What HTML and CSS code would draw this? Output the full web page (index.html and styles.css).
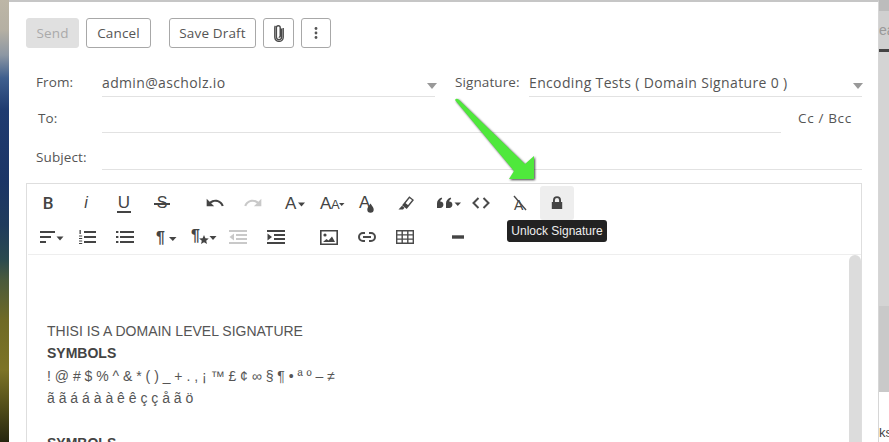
FILE: index.html
```html
<!DOCTYPE html>
<html lang="en">
<head>
<meta charset="utf-8">
<title>Compose</title>
<link rel="stylesheet" href="styles.css">
</head>
<body>
<div class="desktop">
  <div class="wallpaper"></div>
  <main class="dialog">
    <div class="actions">
      <button class="btn btn-send">Send</button>
      <button class="btn btn-cancel">Cancel</button>
      <button class="btn btn-draft">Save Draft</button>
      <button class="btn btn-icon btn-attach" aria-label="Attach">
        <svg width="12" height="18" viewBox="0 0 12 18"><path d="M8.6 4.5v8.6a2.6 2.6 0 0 1-5.2 0V3.6a1.9 1.900 0 0 1 3.800 0v8.600a.9.9 0 0 1-1.400.7" class="ln"/><path d="M10.200 4v9.200a4.200 4.200 0 0 1-8.400 0V3.800a3.200 3.200 0 0 1 .6-2" class="ln"/></svg>
      </button>
      <button class="btn btn-icon btn-more" aria-label="More">
        <svg width="4" height="14" viewBox="0 0 4 14"><circle cx="2" cy="2.500" r="1.400"/><circle cx="2" cy="7" r="1.400"/><circle cx="2" cy="11.500" r="1.400"/></svg>
      </button>
    </div>

    <div class="row row-from">
      <span class="label label-main">From:</span>
      <div class="field field-from"><span>admin@ascholz.io</span><i class="select-caret"></i></div>
      <span class="label label-sig">Signature:</span>
      <div class="field field-sig"><span>Encoding Tests ( Domain Signature 0 )</span><i class="select-caret"></i></div>
    </div>
    <div class="row row-to">
      <span class="label label-main label-to">To:</span>
      <div class="field field-to"></div>
      <span class="cc">Cc / Bcc</span>
    </div>
    <div class="row row-subject">
      <span class="label label-main">Subject:</span>
      <div class="field field-subject"></div>
    </div>

    <section class="editor">
      <div class="toolbar">
        <div class="tb-row">
          <button class="tb w38"><span class="t-b">B</span></button>
          <button class="tb w38"><span class="t-i">i</span></button>
          <button class="tb w38"><span class="t-u">U</span></button>
          <button class="tb w38"><span class="t-s">S</span></button>
          <button class="tb w38 g15"><svg width="20" height="20" viewBox="0 0 24 24"><path d="M12.500 8c-2.650 0-5.050.99-6.900 2.600L2 7v9h9l-3.620-3.620c1.390-1.160 3.160-1.880 5.120-1.880 3.540 0 6.550 2.310 7.600 5.500l2.370-.78C21.080 11.030 17.150 8 12.500 8z"/></svg></button>
          <button class="tb w38 muted"><svg width="20" height="20" viewBox="0 0 24 24"><path d="M11.500 8c2.650 0 5.050.99 6.900 2.600L22 7v9h-9l3.620-3.620C15.230 11.220 13.460 10.500 11.500 10.500c-3.540 0-6.550 2.310-7.600 5.500l-2.370-.78C2.920 11.030 6.850 8 11.500 8z"/></svg></button>
          <button class="tb w38 g4"><svg width="24" height="20" viewBox="0 0 24 20"><text x="2" y="16" class="svgt s17">A</text><path d="M15 9.500h7l-3.500 4z"/></svg></button>
          <button class="tb w36"><svg width="26" height="20" viewBox="0 0 26 20"><text x="1" y="16" class="svgt s17">A</text><text x="12" y="16" class="svgt s13">A</text><path d="M20 10h5.500L22.700 13z"/></svg></button>
          <button class="tb w34"><svg width="16" height="20" viewBox="0 0 16 20"><text x="0" y="15" class="svgt s17">A</text><path d="M10.500 9.500c1.600 2.600 3.200 4 3.200 6a3.200 3.200 0 0 1-6.400 0c0-2 1.600-3.400 3.200-6z" transform="translate(1 1)"/></svg></button>
          <button class="tb w38 g3"><svg width="18" height="18" viewBox="0 0 18 18"><path d="M6 11.200 12.400 3.200l3.600 2.800-6.400 8z" class="ln"/><path d="M8 8.800l3.600 2.800L9.600 14 6 11.200z"/><path d="M1.500 15.500 5 11.800l2.500 2L6 15.500z"/></svg></button>
          <button class="tb w34 g7"><svg width="26" height="20" viewBox="0 0 26 20"><path d="M1 15V10.500C1 7.800 2.600 5.600 5.600 4.500l.6 1.400C4.900 6.600 4.200 7.600 4.200 8.600c2 0 3.200 1.200 3.200 3.200S6 15 4.200 15zM10 15V10.500c0-2.700 1.600-4.900 4.600-6l.6 1.400c-1.300.7-2 1.700-2 2.700 2 0 3.200 1.200 3.200 3.200S15 15 13.200 15z"/><path d="M18.500 9.500h6.500l-3.200 3.600z"/></svg></button>
          <button class="tb w30"><svg width="18" height="14" viewBox="0 0 18 14"><path d="M6.500 2 1.500 7l5 5M11.500 2l5 5-5 5" class="ln2"/></svg></button>
          <button class="tb w38 g5"><svg width="16" height="18" viewBox="0 0 16 18"><text x="2" y="15.500" class="svgt s14">A</text><path d="M2 2 14 16" class="ln"/></svg></button>
          <div class="tb-lock">
            <button class="tb w34 active"><svg width="12" height="14" viewBox="0 0 12 14"><path d="M2 6V4.200a4 4 0 0 1 8 0V6h1.200v7H.8V6zm1.900 0h4.200V4.200a2.100 2.100 0 0 0-4.200 0z"/></svg></button>
            <div class="tooltip">Unlock Signature</div>
          </div>
        </div>
        <div class="tb-row">
          <button class="tb w38 g4"><svg width="24" height="14" viewBox="0 0 24 14"><rect x="0" y="1" width="15" height="2"/><rect x="0" y="6" width="11" height="2"/><rect x="0" y="11" width="6" height="2"/><path d="M16.500 6.500h7L20 10.500z"/></svg></button>
          <button class="tb w32"><svg width="18" height="16" viewBox="0 0 18 16"><rect x="6" y="2" width="12" height="2"/><rect x="6" y="7" width="12" height="2"/><rect x="6" y="12" width="12" height="2"/><rect x="1.500" y="1" width="1.300" height="4"/><rect x="1" y="6.500" width="3.200" height="1"/><rect x="1" y="9" width="3.200" height="1"/><rect x="1" y="11.500" width="3.200" height="1"/><rect x="1" y="14" width="3.200" height="1"/></svg></button>
          <button class="tb w38 g3"><svg width="18" height="14" viewBox="0 0 18 14"><rect x="4" y="1" width="14" height="2"/><rect x="4" y="6" width="14" height="2"/><rect x="4" y="11" width="14" height="2"/><rect x="0" y="1" width="2.400" height="2"/><rect x="0" y="6" width="2.400" height="2"/><rect x="0" y="11" width="2.400" height="2"/></svg></button>
          <button class="tb w38 g4"><svg width="22" height="20" viewBox="0 0 22 20"><text x="0" y="16" class="svgt s16 bold">¶</text><path d="M13 10h7.500l-3.700 4z"/></svg></button>
          <button class="tb w35"><svg width="26" height="22" viewBox="0 0 26 22"><text x="0" y="15" class="svgt s16 bold">¶</text><path d="M13 9l1.400 3.200 3.400.3-2.600 2.200.8 3.300-3-1.800-3 1.800.8-3.300-2.600-2.200 3.400-.3z"/><path d="M18.500 10h7l-3.500 4z"/></svg></button>
          <button class="tb w34 muted"><svg width="18" height="14" viewBox="0 0 18 14"><rect x="0" y="0" width="18" height="2"/><rect x="7" y="4" width="11" height="2"/><rect x="7" y="8" width="11" height="2"/><rect x="0" y="12" width="18" height="2"/><path d="M5 3.500v7L0.500 7z"/></svg></button>
          <button class="tb w38 g2"><svg width="18" height="14" viewBox="0 0 18 14"><rect x="0" y="0" width="18" height="2"/><rect x="7" y="4" width="11" height="2"/><rect x="7" y="8" width="11" height="2"/><rect x="0" y="12" width="18" height="2"/><path d="M0.500 3.500v7L5 7z"/></svg></button>
          <button class="tb w38 g15"><svg width="18" height="15" viewBox="0 0 18 15"><path fill-rule="evenodd" d="M0 0h18v15H0zM1.600 1.600v11.800h14.800V1.600z"/><circle cx="5" cy="5" r="1.600"/><path d="M3 12l3.500-3 2 1.600L12 6.500l3 5.500z"/></svg></button>
          <button class="tb w38"><svg width="18" height="12" viewBox="0 0 18 12"><path d="M7 2H5a4 4 0 0 0 0 8h2M11 2h2a4 4 0 0 1 0 8h-2" class="ln2"/><path d="M5 6h8" class="ln2"/></svg></button>
          <button class="tb w38"><svg width="18" height="14" viewBox="0 0 18 14"><path d="M.7.7h16.600v12.600H.7zM.7 4.900h16.600M.7 9.100h16.600M6.200.7v12.600M11.800.7v12.600" class="ln"/></svg></button>
          <button class="tb w38 g15"><svg width="12" height="4" viewBox="0 0 12 4"><rect width="12" height="3.400" y=".3"/></svg></button>
        </div>
      </div>
      <div class="editor-body">
        <div class="content">
          <p>THISI IS A DOMAIN LEVEL SIGNATURE</p>
          <p><strong>SYMBOLS</strong></p>
          <p>! @ # $ % ^ &amp; * ( ) _ + . , ¡ ™ £ ¢ ∞ § ¶ • ª º – ≠</p>
          <p>ã ã á á à à ê ê ç ç å ã ö</p>
          <p>&nbsp;</p>
          <p><strong>SYMBOLS</strong></p>
        </div>
        <div class="scrollbar"></div>
      </div>
    </section>

    <svg class="arrow" width="90" height="90" viewBox="0 0 90 90"><path d="M1 2Q2 0 4 1L71 66 80 58 80 81 55 81 60 73Z"/></svg>
  </main>
  <aside class="behind">
    <div class="behind-top"></div>
    <div class="behind-search">ea</div>
    <div class="behind-rule"></div>
    <div class="behind-light"></div>
    <div class="behind-dark"></div>
    <div class="behind-foot">ks</div>
  </aside>
</div>
</body>
</html>
```

FILE: styles.css
```css
* { box-sizing: border-box; }
html, body { margin: 0; padding: 0; background: #fff; }
.desktop {
  position: relative;
  display: flex;
  width: 889px;
  height: 442px;
  overflow: hidden;
  font-family: "Open Sans", sans-serif;
  color: #555;
}
.wallpaper {
  flex: 0 0 9px;
  background: linear-gradient(180deg, #bdb6a6 0, #b5b0a3 30px, #8d97a3 55px, #3f5f8e 78px, #1f3b70 110px, #1b3566 180px, #1f3b5c 225px, #2b4a4e 260px, #4a5a3c 280px, #6f6a25 320px, #7d7426 370px, #4e4a18 410px, #26260f 442px);
}
.dialog {
  position: relative;
  flex: 0 0 870px;
  height: 442px;
  padding: 16px 16px 0 17px;
  background: #fff;
  border-top: 2px solid #c6c6c6;
  border-right: 1px solid #d6d6d6;
}

.actions { display: flex; height: 30px; }
.btn {
  height: 30px;
  padding: 0;
  margin: 0;
  border: 1px solid #a8a8a8;
  border-radius: 3px;
  background: #fff;
  color: #555;
  font: 13.5px/28px "Open Sans", sans-serif;
  letter-spacing: .15px;
  display: flex;
  align-items: center;
  justify-content: center;
}
.btn-send { width: 53px; background: #e0e0e0; border-color: #e0e0e0; color: #aaa; }
.btn-cancel { width: 65px; margin-left: 7px; }
.btn-draft { width: 87px; margin-left: 18px; }
.btn-attach { width: 31px; margin-left: 7px; }
.btn-more { width: 30px; margin-left: 7px; }
.btn svg { fill: #555; }
.ln { fill: none; stroke: #4a4a4a; stroke-width: 1.4; }
.ln2 { fill: none; stroke: #4a4a4a; stroke-width: 2; }

.row { display: flex; align-items: flex-end; font-size: 14px; letter-spacing: .35px; }
.row-from { height: 36px; margin-top: 13px; }
.row-to { height: 36px; }
.row-subject { height: 37px; }
.label { color: #555; font-size: 13.5px; letter-spacing: .1px; line-height: 20px; }
.label-main { flex: 0 0 76px; padding-left: 10px; }
.row-from .label-main, .row-to .label-main { padding-bottom: 5px; }
.row-subject .label-main { padding-bottom: 3px; }
.label-to { padding-left: 12px; }
.label-sig { flex: 0 0 74px; padding-bottom: 5px; margin-left: 20px; }
.field {
  position: relative;
  height: 24px;
  border-bottom: 1px solid #e2e2e2;
  line-height: 20px;
  color: #555;
}
.field-from { flex: 0 0 333px; }
.field-sig { flex: 0 0 333px; }
.field-to { flex: 0 0 679px; }
.field-subject { flex: 0 0 760px; }
.select-caret {
  position: absolute;
  right: -2px;
  top: 10px;
  width: 0;
  height: 0;
  border-left: 5.5px solid transparent;
  border-right: 5.5px solid transparent;
  border-top: 6px solid #999;
}
.field-sig .select-caret { right: -1px; }
.cc { margin-left: 17px; padding-bottom: 5px; line-height: 20px; font-size: 13.5px; letter-spacing: .65px; }

.editor {
  margin-top: 13px;
  height: 300px;
  border: 1px solid #dedede;
  background: #fff;
}
.toolbar { height: 71px; padding: 2px 0 0 1px; border-bottom: 1px solid #eee; margin-left: 1px; }
.tb-row { display: flex; height: 34px; }
.tb {
  height: 34px;
  padding: 0;
  border: 0;
  border-radius: 3px;
  background: transparent;
  display: flex;
  align-items: center;
  justify-content: center;
  flex: none;
  color: #444;
}
.tb svg { fill: #444; overflow: visible; }
.tb.muted svg { fill: #c9c9c9; }
.w30 { width: 30px; }
.w32 { width: 32px; }
.w34 { width: 34px; }
.w35 { width: 35px; }
.w36 { width: 36px; }
.w38 { width: 38px; }
.g2 { margin-left: 2px; }
.g3 { margin-left: 3px; }
.g4 { margin-left: 4px; }
.g5 { margin-left: 5px; }
.g7 { margin-left: 7px; }
.g15 { margin-left: 15px; }
.tb span { font-family: "Liberation Sans", sans-serif; font-size: 17px; line-height: 20px; color: #444; }
.tb .t-b { font-family: Roboto, sans-serif; font-weight: 500; }
.tb .t-i { font-style: italic; font-size: 16px; }
.tb .t-u { border-bottom: 2px solid #444; line-height: 17px; padding: 0 1px; }
.tb .t-s { position: relative; padding: 0 3px; font-size: 16px; }
.t-s::after {
  content: "";
  position: absolute;
  left: 0;
  right: 0;
  top: 10px;
  height: 1.5px;
  background: #444;
}
.svgt { font-family: "Liberation Sans", sans-serif; fill: #444; }
.s13 { font-size: 13px; }
.s14 { font-size: 14px; }
.s16 { font-size: 16px; }
.s17 { font-size: 17px; }
.bold { font-weight: 700; }

.tb-lock { position: relative; margin-left: 1px; }
.tb.active { background: #eeeeee; }
.tooltip {
  position: absolute;
  left: -33px;
  top: 34px;
  width: 100px;
  height: 22px;
  background: #222;
  border-radius: 3px;
  color: #eee;
  font: 12px/22px "Liberation Sans", sans-serif;
  text-align: center;
}

.editor-body { display: flex; height: 228px; }
.content {
  flex: 1;
  padding: 65px 0 0 20px;
  font: 14px/22.4px "Liberation Sans", sans-serif;
  color: #555;
}
.content p { margin: 0; white-space: nowrap; }
.content strong { font-weight: 700; color: #444; }
.scrollbar {
  flex: 0 0 12px;
  background: #dcdcdc;
  border-radius: 6px 6px 0 0;
}

.arrow {
  position: absolute;
  left: 445px;
  top: 96px;
  fill: #4fe83c;
  filter: drop-shadow(1.5px 1.5px 1.2px rgba(0,0,0,.75));
}

.behind { flex: 1; display: flex; flex-direction: column; background: #fff; font: 13px "Liberation Sans", sans-serif; }
.behind-top { height: 11px; background: #bcbcbc; }
.behind-search { height: 38px; background: #d0d0d0; color: #999; line-height: 38px; white-space: nowrap; font-size: 14px; }
.behind-rule { height: 3px; background: #444; }
.behind-light { height: 254px; background: #d4d4d4; }
.behind-dark { height: 86px; background: #c9c9c9; }
.behind-foot { flex: 1; color: #444; padding-top: 33px; }
```
